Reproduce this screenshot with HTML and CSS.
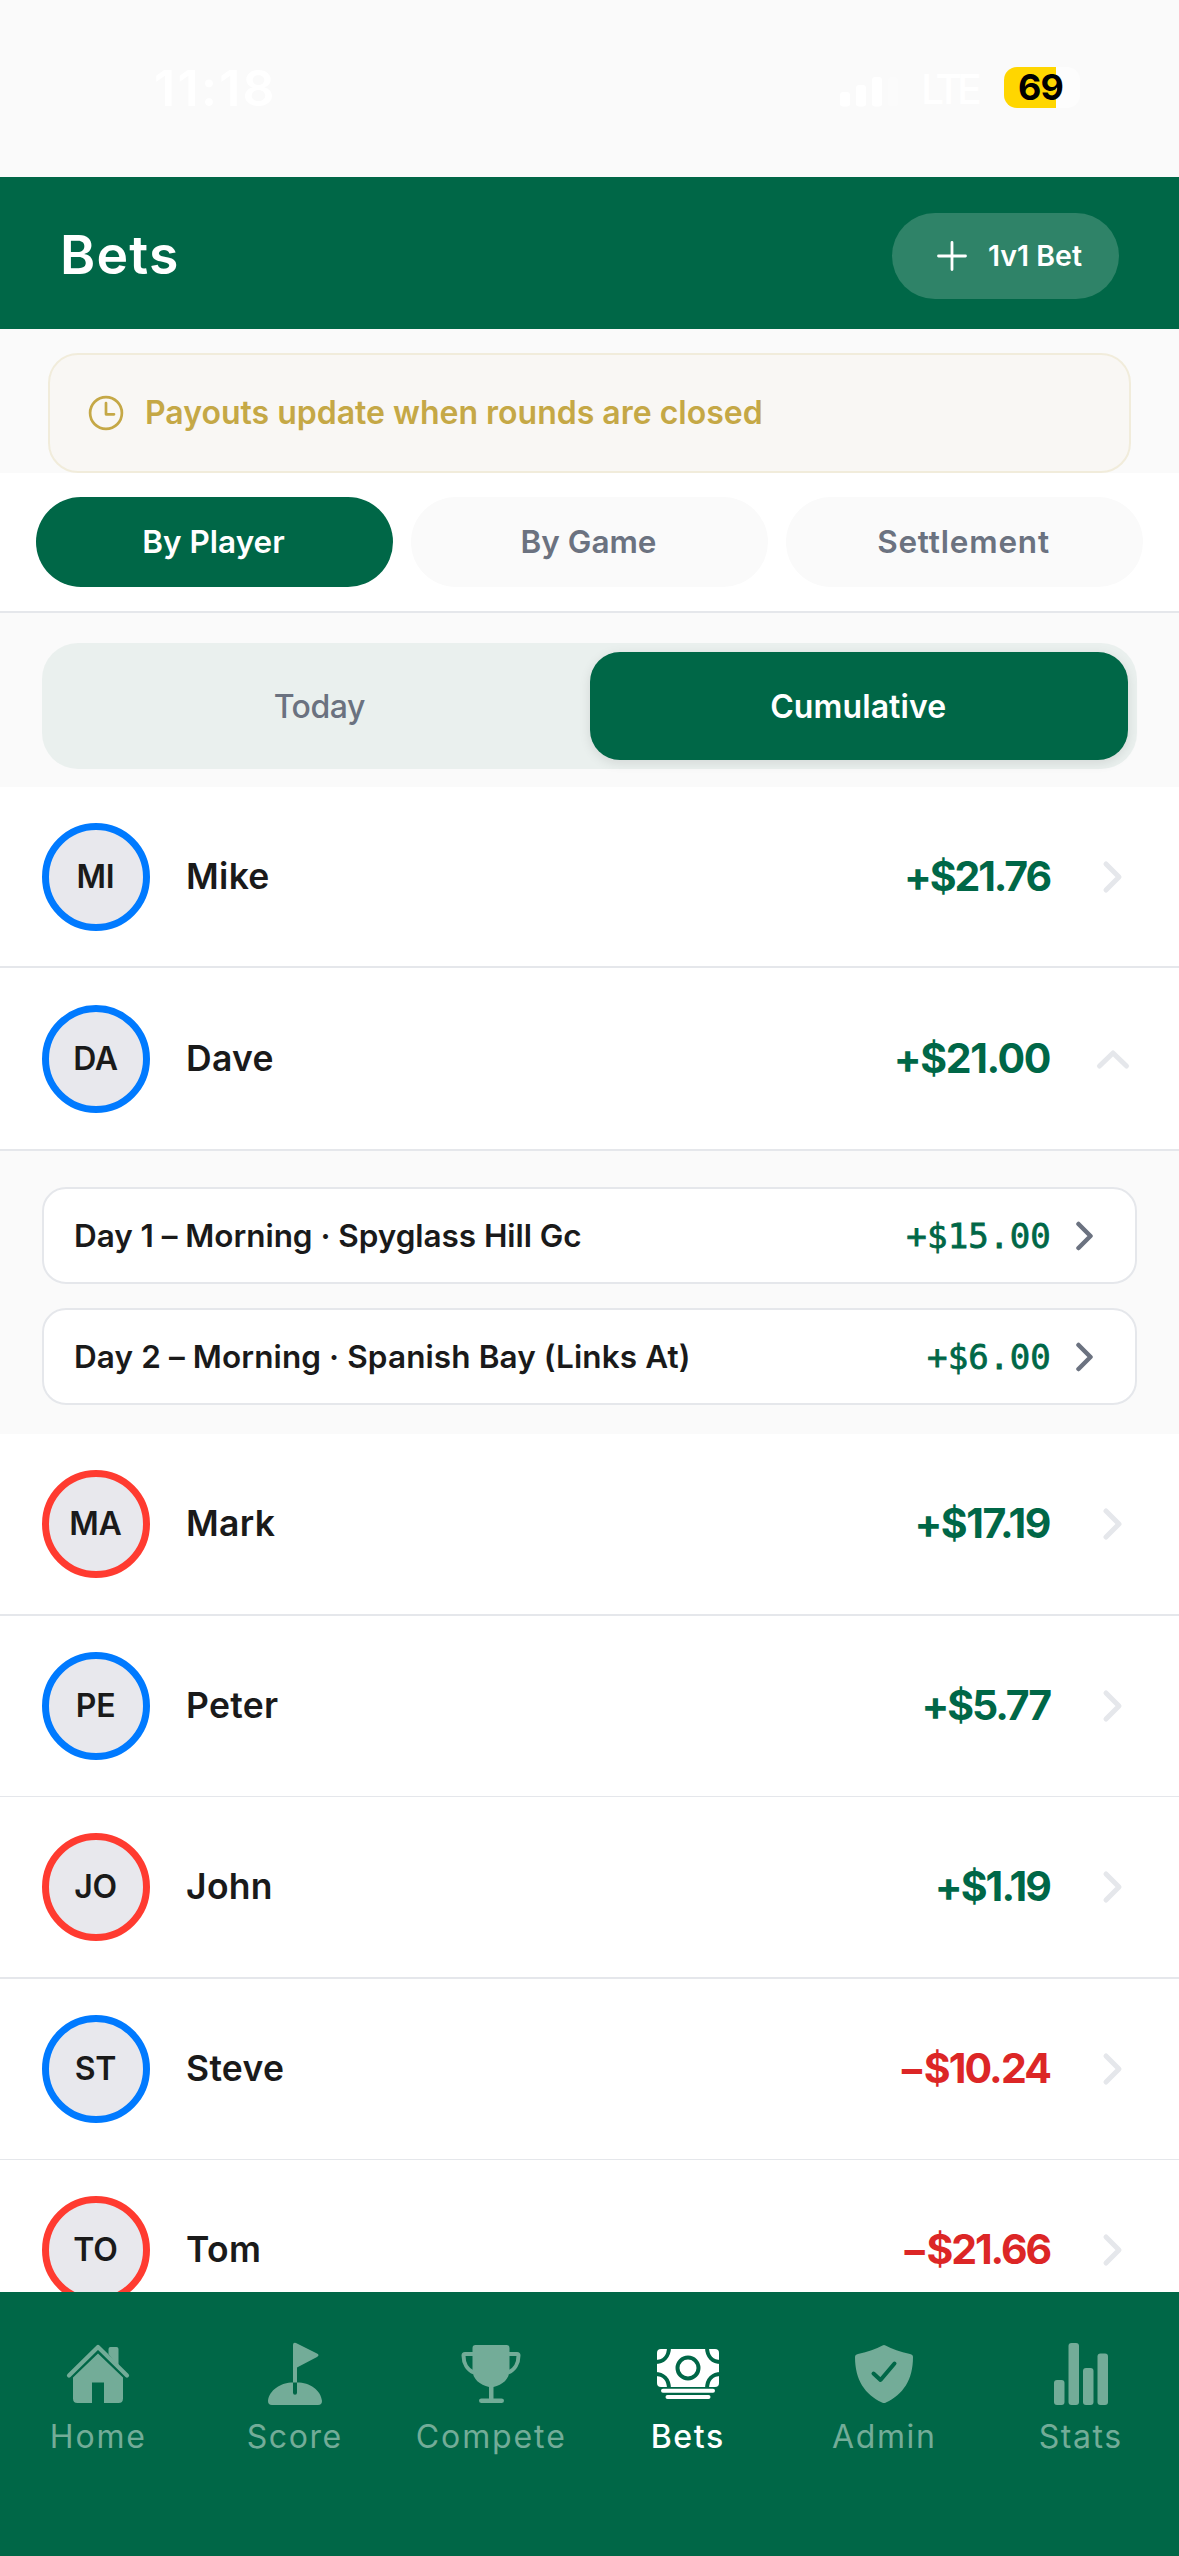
FILE: index.html
```html
<!DOCTYPE html>
<html lang="en">
<head>
<meta charset="utf-8">
<title>Bets</title>
<link rel="stylesheet" href="styles.css">
</head>
<body>
<div class="status">
  <span class="time">11:18</span>
  <span class="status-right">
    <svg class="signal" width="60" height="30" viewBox="0 0 60 30" fill="#fff"><rect y="15" width="10" height="14.500" rx="3"/><rect x="16" y="8" width="10" height="21.500" rx="3"/><rect x="32" width="10" height="29.500" rx="3"/><rect x="48" width="10" height="29.500" rx="3" opacity=".25"/></svg>
    <span class="lte">LTE</span>
    <span class="battery">69</span>
  </span>
</div>
<header class="header">
  <h1 class="title">Bets</h1>
  <button class="new-bet"><svg width="30" height="30" viewBox="0 0 30 30" fill="none" stroke="#fff" stroke-width="2.800" stroke-linecap="round"><path d="M15 1.500v27M1.500 15h27"/></svg><span class="new-bet-label">1v1 Bet</span></button>
</header>
<div class="notice"><svg width="36" height="36" viewBox="0 0 36 36" fill="none" stroke="#c5a846" stroke-width="2.700" stroke-linecap="round" stroke-linejoin="round"><circle cx="18" cy="18" r="15.900"/><path d="M18 8v11.300h8"/></svg><span class="notice-text">Payouts update when rounds are closed</span></div>
<nav class="tabs"><span class="tab active t1"><b>By Player</b></span><span class="tab t2"><b>By Game</b></span><span class="tab t3"><b>Settlement</b></span></nav>
<div class="segment-wrap"><div class="segment"><span class="seg"><b class="s1">Today</b></span><span class="seg on"><b class="s2">Cumulative</b></span></div></div>
<main class="list">
  <div class="row first"><span class="avatar blue">MI</span><span class="name">Mike</span><span class="amount n1">+$21.76</span><svg class="chev" viewBox="0 0 36 36"><path d="M11 5l13 13-13 13"/></svg></div>
  <div class="row open"><span class="avatar blue">DA</span><span class="name">Dave</span><span class="amount n2">+$21.00</span><svg class="chev" viewBox="0 0 36 36"><path d="M4.500 25L18 12l13.500 13"/></svg></div>
  <div class="details">
    <div class="card"><span class="round r1">Day 1 – Morning · Spyglass Hill Gc</span><span class="money">+$15.00</span><svg class="small-chev" viewBox="0 0 18 30"><path d="M2.500 3l12 12-12 12"/></svg></div>
    <div class="card"><span class="round r2">Day 2 – Morning · Spanish Bay (Links At)</span><span class="money">+$6.00</span><svg class="small-chev" viewBox="0 0 18 30"><path d="M2.500 3l12 12-12 12"/></svg></div>
  </div>
  <div class="row"><span class="avatar red">MA</span><span class="name">Mark</span><span class="amount n3">+$17.19</span><svg class="chev" viewBox="0 0 36 36"><path d="M11 5l13 13-13 13"/></svg></div>
  <div class="row thin"><span class="avatar blue">PE</span><span class="name">Peter</span><span class="amount n4">+$5.77</span><svg class="chev" viewBox="0 0 36 36"><path d="M11 5l13 13-13 13"/></svg></div>
  <div class="row"><span class="avatar red">JO</span><span class="name">John</span><span class="amount n5">+$1.19</span><svg class="chev" viewBox="0 0 36 36"><path d="M11 5l13 13-13 13"/></svg></div>
  <div class="row thin"><span class="avatar blue">ST</span><span class="name">Steve</span><span class="amount neg n6">−$10.24</span><svg class="chev" viewBox="0 0 36 36"><path d="M11 5l13 13-13 13"/></svg></div>
  <div class="row"><span class="avatar red">TO</span><span class="name">Tom</span><span class="amount neg n7">−$21.66</span><svg class="chev" viewBox="0 0 36 36"><path d="M11 5l13 13-13 13"/></svg></div>
</main>
<nav class="bottom">
  <span class="item"><svg viewBox="0 0 72 72"><path d="M7 37.500L36 9 65 37.500" fill="none" stroke="currentColor" stroke-width="4.200" stroke-linecap="round" stroke-linejoin="round"/><path fill="currentColor" d="M46.500 16V11q0-2 2-2h6q2 0 2 2v17.500zM36 15.500L61 39.500V60.500q0 4.500-4.500 4.500H42V44.500H30V65H15.500q-4.500 0-4.500-4.500V39.500z"/></svg><b class="b1">Home</b></span>
  <span class="item"><svg viewBox="0 0 72 72"><path fill="currentColor" d="M34 7q0-3 3-2l21 10.500q3 1.500 0 3.500L38 29.500V44.500h-4zM13 67q-4 0-4-4C10 52 22 44.500 34 44.200v10.500q0 2 2 2t2-2V44.200c13 .3 24 8 25 18.800q0 4-4 4z"/></svg><b class="b2">Score</b></span>
  <span class="item"><svg viewBox="0 0 72 72"><path fill="currentColor" d="M17.500 10q0-3 3-3h31q3 0 3 3v22c0 9-7 15-16 17v11.500h8q2.500 0 2.500 2.200T46.500 65h-20q-2.500 0-2.500-2.300t2.500-2.200h7.500V49c-9-2-16.500-8-16.500-17z"/><path fill="none" stroke="currentColor" stroke-width="4" d="M18 16h-8q-1.500 0-1.500 1.500c0 8 4 14.500 10 17M54 16h8q1.500 0 1.500 1.500c0 8-4 14.500-10 17"/></svg><b class="b3">Compete</b></span>
  <span class="item on"><svg viewBox="0 0 72 72"><rect x="5" y="11" width="62" height="38" rx="4" fill="currentColor"/><g fill="none" stroke="#006747" stroke-width="4"><circle cx="36" cy="30" r="10.500"/><path d="M3 24c8 0 14-5 14-15M69 24c-8 0-14-5-14-15M3 36c8 0 14 5 14 15M69 36c-8 0-14 5-14 15"/></g><path d="M11 52.800h50M15.500 59h41" fill="none" stroke="currentColor" stroke-width="4" stroke-linecap="round"/></svg><b class="b4">Bets</b></span>
  <span class="item"><svg viewBox="0 0 72 72"><path fill="currentColor" d="M34.500 7.500q1.500-.8 3 0C44 11 52 14 62 16q3 .7 3 3c0 23-10 37.500-27 45.500q-2 1-4 0C17 56.500 7 42 7 19q0-2.300 3-3c10-2 18-5 24.500-8.500z"/><path d="M25.500 35.500l7 6.500L46.500 25.500" fill="none" stroke="#006747" stroke-width="4" stroke-linecap="round" stroke-linejoin="round"/></svg><b class="b5">Admin</b></span>
  <span class="item"><svg viewBox="0 0 72 72" fill="currentColor"><rect x="9" y="42" width="10.500" height="25" rx="3"/><rect x="23.500" y="5" width="10.500" height="62" rx="3"/><rect x="38" y="30" width="10.500" height="37" rx="3"/><rect x="52.500" y="15.500" width="10.500" height="51.500" rx="3"/></svg><b class="b6">Stats</b></span>
</nav>
</body>
</html>
```
FILE: styles.css
```css
* { box-sizing: border-box; }
body { margin: 0; width: 1179px; height: 2556px; overflow: hidden; display: flex; flex-direction: column; background: #fafafa; color: #1a1a1a; font-family: Inter, "Liberation Sans", sans-serif; white-space: nowrap; }
svg { flex: none; display: block; }
b { font-weight: inherit; }
.status { flex: none; height: 177px; padding: 60px 99px 0 154px; display: flex; justify-content: space-between; color: #fff; }
.time { font-size: 50px; line-height: 56px; font-weight: 600; letter-spacing: 2.300px; }
.status-right { display: flex; align-items: flex-start; }
.signal { margin: 17px 21px 0 0; }
.lte { font-size: 41px; line-height: 58px; font-weight: 500; width: 83px; letter-spacing: -5px; }
.battery { margin-top: 7px; width: 76px; height: 41px; border-radius: 13px; background: linear-gradient(90deg, #ffd600 52px, #fdfdfd 52px); color: #000; font-size: 36px; line-height: 41px; font-weight: 700; padding-left: 14px; letter-spacing: -.8px; }
.header { flex: none; height: 152px; background: #006747; display: flex; justify-content: space-between; align-items: center; padding: 3px 60px 0 60px; color: #fff; }
.title { margin: 0; font-size: 53.500px; line-height: 60px; font-weight: 600; letter-spacing: 1.200px; padding-top: 1px; }
.new-bet { width: 227px; height: 86px; margin-top: 3px; border: 0; border-radius: 43px; background: #2f8368; color: #fff; font-family: inherit; display: flex; align-items: center; padding: 0 0 0 45px; gap: 21px; }
.new-bet-label { font-size: 28.500px; line-height: 34px; font-weight: 600; padding-bottom: 1px; }
.notice { flex: none; margin: 24px 48px 0; height: 120px; border: 2px solid #f1ecdb; border-radius: 30px; background: #f9f7f4; display: flex; align-items: center; padding-left: 38px; gap: 21px; color: #c5a846; }
.notice-text { font-size: 32px; font-weight: 600; letter-spacing: 0; padding-bottom: 1px; }
.tabs { flex: none; height: 140px; background: #fff; border-bottom: 2px solid #e5e7eb; padding: 24px 36px; display: grid; grid-template-columns: repeat(3, 1fr); gap: 18px; }
.tab { height: 90px; border-radius: 45px; background: #fafafa; color: #6b7280; font-size: 31.500px; font-weight: 600; letter-spacing: 0; display: flex; align-items: center; justify-content: center; padding: 0 2px 1px 0; }
.tab.active { background: #006747; color: #fff; }
.t3 { letter-spacing: .8px; }
.segment-wrap { flex: none; height: 174px; padding: 30px 42px 0; }
.segment { height: 126px; border-radius: 36px; background: #eaf0ee; padding: 9px; display: grid; grid-template-columns: 1fr 1fr; }
.seg { display: flex; align-items: center; justify-content: center; border-radius: 30px; font-size: 32px; color: #6b7280; font-weight: 500; letter-spacing: -.5px; padding-right: 2px; }
.seg.on { background: #006747; color: #fff; font-weight: 600; letter-spacing: .1px; box-shadow: 0 3px 12px rgba(0,0,0,.1); padding-right: 1px; }
.list { flex: none; height: 1505px; overflow: hidden; }
.row { height: 181.500px; border-bottom: 2px solid #e5e7eb; background: #fff; display: flex; align-items: center; padding: 0 48px 0 42px; }
.row.first { height: 181px; }
.row.open { height: 183px; }
.row.thin { border-bottom-width: 1px; }
.avatar { width: 108px; height: 108px; border-radius: 50%; border: 7.500px solid #007aff; background: #e8e8ed; display: flex; align-items: center; justify-content: center; font-size: 32px; font-weight: 600; letter-spacing: -.2px; padding-right: 1px; }
.avatar.red { border-color: #ff3b30; }
.name { flex: 1; padding-left: 36px; font-size: 35.500px; font-weight: 600; letter-spacing: .3px; }
.amount { color: #006747; font-size: 41px; font-weight: 700; letter-spacing: -2.100px; padding: 0 1px 1px 0; }
.amount.neg { color: #dc2626; }
.amount.n2, .amount.n3 { letter-spacing: -1.400px; }
.amount.n5, .amount.n6 { letter-spacing: -1.900px; }
.chev { width: 36px; height: 36px; margin-left: 44px; fill: none; stroke: #e5e7eb; stroke-width: 5; stroke-linecap: round; stroke-linejoin: round; }
.details { height: 283px; padding: 36px 42px 29px; display: flex; flex-direction: column; gap: 24px; }
.card { height: 97px; border: 2px solid #e5e7eb; border-radius: 24px; background: #fff; display: flex; align-items: center; padding: 0 41px 0 30px; }
.round { flex: 1; font-size: 31.500px; font-weight: 600; }
.r1 { letter-spacing: -.05px; }
.r2 { letter-spacing: .1px; }
.money { font-family: "DejaVu Sans Mono", monospace; font-size: 34px; color: #006747; -webkit-text-stroke: .8px #006747; letter-spacing: .2px; }
.small-chev { width: 18px; height: 30px; margin-left: 25px; fill: none; stroke: #6b7280; stroke-width: 4.500; stroke-linecap: round; stroke-linejoin: round; }
.bottom { flex: none; height: 264px; padding-top: 46px; background: #006747; color: #73ac98; display: grid; grid-template-columns: repeat(6, 1fr); }
.item { display: flex; flex-direction: column; align-items: center; font-size: 32px; line-height: 40px; }
.item svg { width: 72px; height: 72px; margin-bottom: 7px; }
.item.on { color: #fff; font-weight: 500; }
.item b { letter-spacing: 1.600px; }
.item .b1 { letter-spacing: 1.800px; }
.item .b3 { letter-spacing: 1.900px; }
```
